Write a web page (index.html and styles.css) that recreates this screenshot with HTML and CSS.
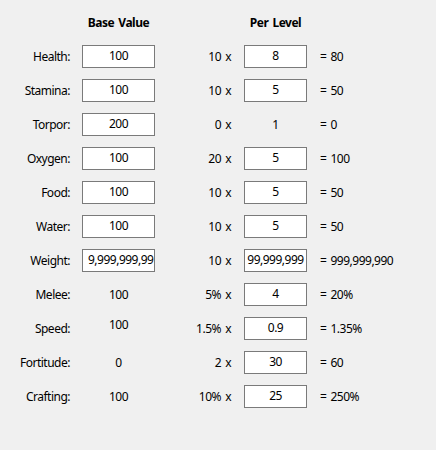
FILE: index.html
```html
<!DOCTYPE html>
<html>
<head>
<meta charset="utf-8">
<link rel="stylesheet" href="styles.css">
</head>
<body>
<div class="table">
  <div></div><div class="head">Base Value</div><div></div><div class="head">Per Level</div><div></div>

  <div class="label">Health:</div><div class="box">100</div><div class="mult">10 x</div><div class="box">8</div><div class="res">= 80</div>
  <div class="label">Stamina:</div><div class="box">100</div><div class="mult">10 x</div><div class="box">5</div><div class="res">= 50</div>
  <div class="label">Torpor:</div><div class="box">200</div><div class="mult">0 x</div><div class="plain">1</div><div class="res">= 0</div>
  <div class="label">Oxygen:</div><div class="box">100</div><div class="mult">20 x</div><div class="box">5</div><div class="res">= 100</div>
  <div class="label">Food:</div><div class="box">100</div><div class="mult">10 x</div><div class="box">5</div><div class="res">= 50</div>
  <div class="label">Water:</div><div class="box">100</div><div class="mult">10 x</div><div class="box">5</div><div class="res">= 50</div>
  <div class="label">Weight:</div><div class="box left">9,999,999,99</div><div class="mult">10 x</div><div class="box">99,999,999</div><div class="res">= 999,999,990</div>
  <div class="label">Melee:</div><div class="plain">100</div><div class="mult">5% x</div><div class="box">4</div><div class="res">= 20%</div>
  <div class="label">Speed:</div><div class="plain up">100</div><div class="mult">1.5% x</div><div class="box">0.9</div><div class="res">= 1.35%</div>
  <div class="label">Fortitude:</div><div class="plain">0</div><div class="mult">2 x</div><div class="box">30</div><div class="res">= 60</div>
  <div class="label">Crafting:</div><div class="plain">100</div><div class="mult">10% x</div><div class="box">25</div><div class="res">= 250%</div>
</div>
</body>
</html>
```
FILE: styles.css
```css
html, body {
  margin: 0;
  padding: 0;
  background: #f0f0f0;
}
body {
  width: 436px;
  height: 450px;
  font-family: "Noto Sans", "Open Sans", sans-serif;
  font-size: 12px;
  letter-spacing: -0.5px;
  word-spacing: 1.5px;
  color: #000;
}
.table {
  display: grid;
  grid-template-columns: 82px 73px 89px 63px 1fr;
  grid-auto-rows: 23px;
  row-gap: 11px;
  padding-top: 11px;
}
.table > div {
  line-height: 23px;
  white-space: nowrap;
}
.head {
  font-weight: bold;
  text-align: center;
}
.label {
  text-align: right;
  padding-right: 12px;
}
.mult {
  text-align: right;
  padding-right: 13px;
}
.res {
  padding-left: 13px;
}
.table > .box {
  box-sizing: border-box;
  background: #fff;
  border: 1px solid #7a7a7a;
  line-height: 20px;
  text-align: center;
  overflow: hidden;
}
.table > .box.left {
  text-align: left;
  padding-left: 5px;
}
.plain {
  text-align: center;
}
.table > .plain.up {
  line-height: 16px;
}
```
